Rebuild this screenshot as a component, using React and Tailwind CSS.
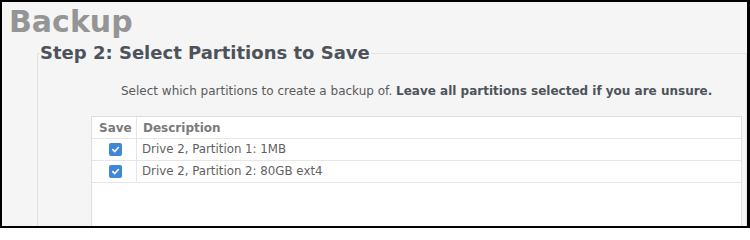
import React from "react";

const font = { fontFamily: '"DejaVu Sans", Verdana, sans-serif' };

function Check() {
  return (
    <span className="inline-flex h-[13px] w-[13px] items-center justify-center rounded-[2px] bg-[#3f88d8]">
      <svg width="9" height="9" viewBox="0 0 10 10" fill="none">
        <path d="M2 5.2 L4.2 7.3 L8.2 2.8" stroke="white" strokeWidth="1.8" strokeLinecap="round" strokeLinejoin="round" />
      </svg>
    </span>
  );
}

const rows = ["Drive 2, Partition 1: 1MB", "Drive 2, Partition 2: 80GB ext4"];

export default function App() {
  return (
    <div
      className="box-border h-[228px] w-[750px] overflow-hidden border-t-2 border-l-2 border-b-2 border-r-[3px] border-black bg-[#f5f5f5]"
      style={font}
    >
      <h1 className="pl-[7px] pt-[4px] text-[30px] font-bold leading-[32px] text-[#959595]">Backup</h1>
      <fieldset className="ml-[35px] mt-[4px] h-[300px] border-l border-t border-r border-[#e2e2e2]">
        <legend className="ml-[2px] px-0 pr-[1px] text-[18px] font-bold leading-[22px] text-[#4d535b]">
          Step 2: Select Partitions to Save
        </legend>
        <p className="mt-[19px] pl-[83px] text-[12px] leading-[16px] text-[#5a5a5a]">
          Select which partitions to create a backup of.{" "}
          <span className="font-bold text-[#4d535b]">Leave all partitions selected if you are unsure.</span>
        </p>
        <div className="ml-[53px] mr-[4px] mt-[17px] h-[200px] border border-[#dedede] bg-white">
          <div className="flex h-[22px] border-b border-[#e6e6e6] text-[12px] font-bold text-[#7a7a7a]">
            <div className="flex w-[45px] items-center border-r border-[#e6e6e6] pl-[7px]">Save</div>
            <div className="flex items-center pl-[6px]">Description</div>
          </div>
          {rows.map((r) => (
            <div key={r} className="flex h-[22px] border-b border-[#e6e6e6] text-[11.8px] text-[#5f5f5f]">
              <div className="flex w-[45px] items-center justify-center border-r border-[#e6e6e6] pl-[3px]">
                <Check />
              </div>
              <div className="flex items-center pl-[5px]">{r}</div>
            </div>
          ))}
        </div>
      </fieldset>
    </div>
  );
}
